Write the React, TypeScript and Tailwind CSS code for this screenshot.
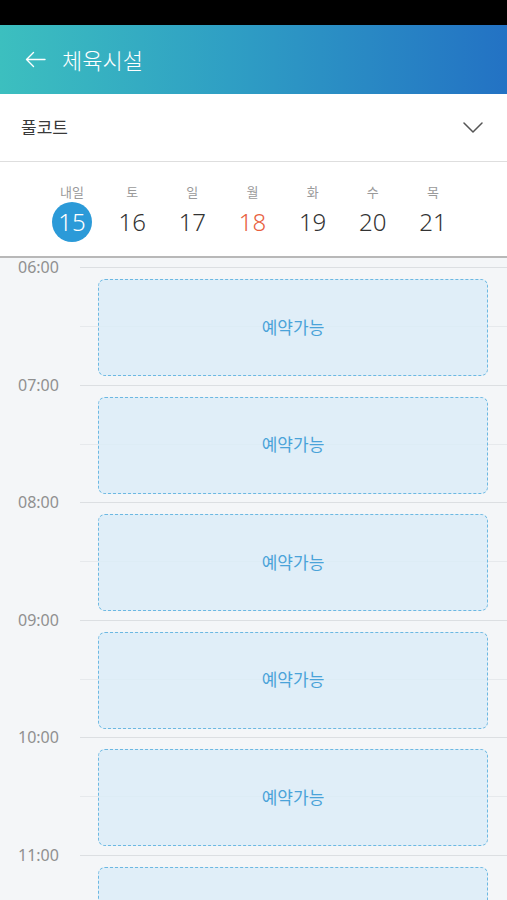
const days = [
  { label: "내일", num: 15, today: true },
  { label: "토", num: 16 },
  { label: "일", num: 17 },
  { label: "월", num: 18, holiday: true },
  { label: "화", num: 19 },
  { label: "수", num: 20 },
  { label: "목", num: 21 },
]

const hours = ["06:00", "07:00", "08:00", "09:00", "10:00", "11:00"]

export default function App() {
  return (
    <div className="w-[507px] h-[900px] overflow-hidden bg-[#f4f6f8] font-['Noto_Sans','Noto_Sans_CJK_KR',sans-serif]">
      <div className="h-[25px] bg-black" />

      <div className="h-[69px] flex items-center bg-[linear-gradient(90deg,#3cbfbf_0%,#2f9fc4_45%,#2372c4_100%)]">
        <svg className="ml-[25px]" width="21" height="17" viewBox="0 0 21 17" fill="none">
          <path d="M20 8.5H1.5M8.5 1.5L1.5 8.5l7 7" stroke="white" strokeWidth="1.4" strokeLinecap="round" strokeLinejoin="round" />
        </svg>
        <span className="ml-[16px] text-white text-[22px] leading-none font-light">체육시설</span>
      </div>

      <div className="h-[68px] flex items-center justify-between bg-white border-b border-[#dedede] pl-[21px] pr-[24px]">
        <span className="text-[17px] text-[#3a3a3a]">풀코트</span>
        <svg width="20" height="11" viewBox="0 0 20 11" fill="none">
          <path d="M1 1l9 9 9-9" stroke="#555" strokeWidth="1.5" strokeLinecap="round" strokeLinejoin="round" />
        </svg>
      </div>

      <div className="h-[96px] bg-white border-b-2 border-[#b8b8b8]">
        <div className="ml-[42px] w-[421px] grid grid-cols-7 pt-[21px]">
          {days.map((d) => (
            <div key={d.num} className="flex flex-col items-center">
              <span className="text-[13px] leading-[18px] text-[#9a9a9a]">{d.label}</span>
              <div
                className={
                  d.today
                    ? "mt-[1px] w-[40px] h-[40px] rounded-full bg-[#2b9ad8] flex items-center justify-center text-white text-[24px] font-light"
                    : d.holiday
                    ? "mt-[1px] w-[40px] h-[40px] flex items-center justify-center text-[#e8603e] text-[24px] font-light"
                    : "mt-[1px] w-[40px] h-[40px] flex items-center justify-center text-[#333] text-[24px] font-light"
                }
              >
                {d.num}
              </div>
            </div>
          ))}
        </div>
      </div>

      <div className="pt-[9px]">
        {hours.map((h) => (
          <div key={h} className="flex h-[117.5px]">
            <div className="w-[80px] pl-[18px]">
              <span className="block -translate-y-1/2 text-[16px] leading-[20px] text-[#909090]">{h}</span>
            </div>
            <div className="relative flex-1 border-t border-[#dcdfe2]">
              <div className="absolute left-0 right-0 top-[58px] h-px bg-[#e6e9ec]" />
              <div className="relative mt-[11px] ml-[18px] mr-[19px] h-[97px] rounded-[7px] border-[1.5px] border-dashed border-[#6cb8e2] bg-[#dbecf7]/80 flex items-center justify-center">
                <span className="text-[17px] text-[#4aa3d9]">예약가능</span>
              </div>
            </div>
          </div>
        ))}
      </div>
    </div>
  )
}
